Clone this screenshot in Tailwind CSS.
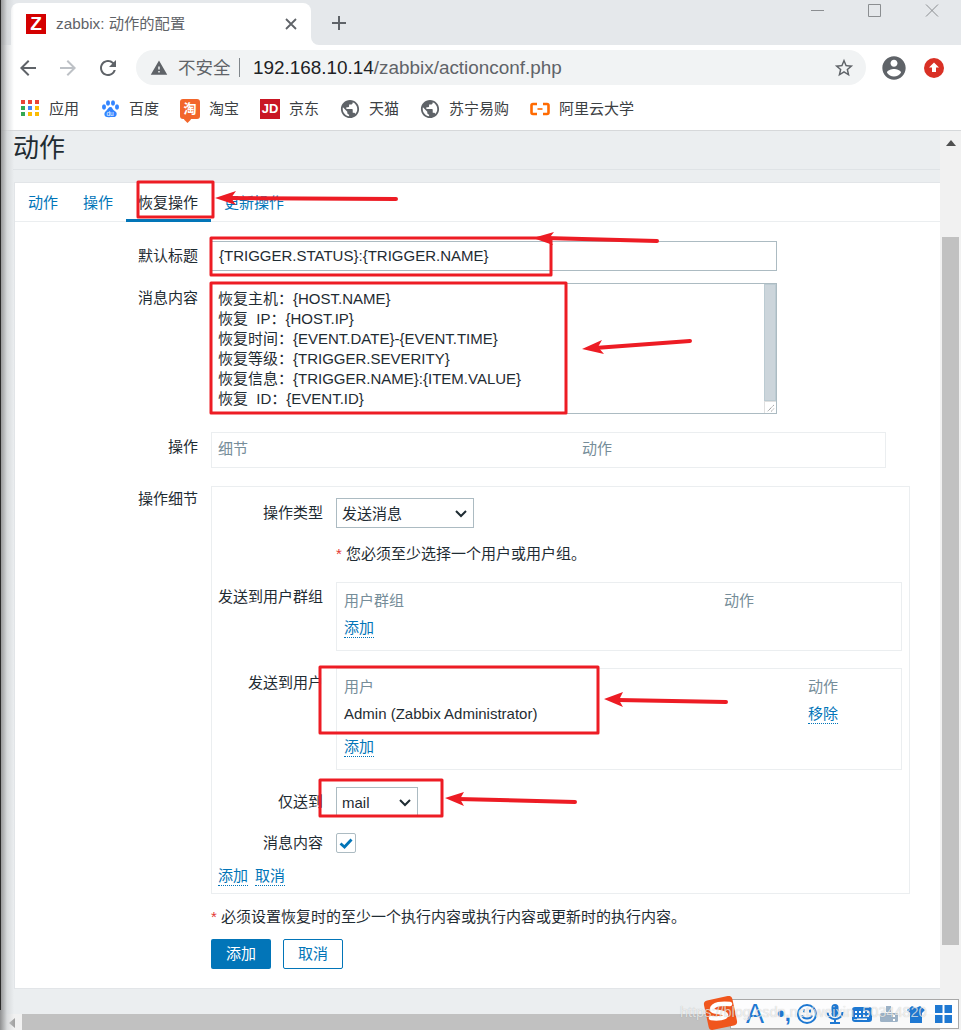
<!DOCTYPE html>
<html lang="zh-CN">
<head>
    <meta charset="UTF-8">
    <title>zabbix: 动作的配置</title>
    <script src="https://cdn.jsdelivr.net/npm/@tailwindcss/browser@4"></script>
</head>
<body class="bg-white">
<div class="relative w-[961px] h-[1030px] overflow-hidden flex flex-col text-[15px] leading-[20px] text-[#1f2c33] [font-family:'Liberation_Sans','Noto_Sans_CJK_SC',sans-serif]">

    <!-- tab strip -->
    <div class="h-[45px] shrink-0 bg-[#e5e8eb] flex pl-[11px]">
        <div class="mt-[3px] w-[300px] h-[42px] bg-white rounded-t-[8px] flex items-center pl-[15px] pr-[12px]">
            <div class="w-[20px] h-[20px] bg-[#d40000] text-white font-bold text-[19px] flex items-center justify-center">Z</div>
            <span class="ml-[10px] text-[#5f6368] text-[15.3px]">zabbix: 动作的配置</span>
            <svg class="ml-auto mr-[1px]" width="14" height="14" viewBox="0 0 14 14" fill="none" stroke="#5f6368" stroke-width="1.8"><path d="M2 2l10 10M12 2L2 12"/></svg>
        </div>
        <div class="self-end w-[8px] h-[8px] bg-white"><div class="w-full h-full bg-[#e5e8eb] rounded-bl-[8px]"></div></div>
        <svg class="mt-[15px] ml-[12px]" width="16" height="16" viewBox="0 0 16 16" fill="#5f6368"><path d="M7 1h2v6h6v2H9v6H7V9H1V7h6z"/></svg>
        <svg class="ml-auto mt-[3px] mr-[21px]" width="130" height="16" viewBox="0 0 130 16" fill="none" stroke="#8b8e91" stroke-width="1"><path d="M1 7.5h13M58.5 1.5h12v12h-12zM116 1.5l12 12M128 1.5l-12 12"/></svg>
    </div>

    <!-- address bar -->
    <div class="h-[45px] shrink-0 bg-white flex items-center pl-[16px]">
        <svg width="24" height="24" viewBox="0 0 24 24" fill="#5f6368"><path d="M20 11H7.83l5.59-5.59L12 4l-8 8 8 8 1.41-1.41L7.83 13H20v-2z"/></svg>
        <svg class="ml-[16px]" width="24" height="24" viewBox="0 0 24 24" fill="#bdc1c6"><path d="M4 11h12.17l-5.59-5.59L12 4l8 8-8 8-1.41-1.41L16.17 13H4v-2z"/></svg>
        <svg class="ml-[16px]" width="24" height="24" viewBox="0 0 24 24" fill="#5f6368"><path d="M17.65 6.35A7.958 7.958 0 0 0 12 4c-4.42 0-7.99 3.58-7.99 8s3.57 8 7.99 8c3.73 0 6.84-2.55 7.73-6h-2.08A5.99 5.99 0 0 1 12 18c-3.31 0-6-2.69-6-6s2.69-6 6-6c1.66 0 3.14.69 4.22 1.78L13 11h7V4l-2.35 2.35z"/></svg>
        <div class="ml-[16px] w-[730px] h-[35px] rounded-full bg-[#f1f3f4] flex items-center pl-[14px] pr-[11px]">
            <svg width="18" height="18" viewBox="0 0 24 24" fill="#5f6368"><path d="M1 21h22L12 2 1 21zm12-3h-2v-2h2v2zm0-4h-2v-4h2v4z"/></svg>
            <span class="ml-[10px] text-[17.500px] text-[#5f6368]">不安全</span>
            <span class="ml-[8px] w-[1.5px] h-[19px] bg-[#80868b]"></span>
            <span class="ml-[13px] text-[18.900px] text-[#5f6368]"><span class="text-[#202124]">192.168.10.14</span>/zabbix/actionconf.php</span>
            <svg class="ml-auto" width="22" height="22" viewBox="0 0 24 24" fill="#5f6368"><path d="M22 9.24l-7.19-.62L12 2 9.19 8.63 2 9.24l5.46 4.73L5.82 21 12 17.27 18.18 21l-1.63-7.03L22 9.24zM12 15.4l-3.76 2.27 1-4.28-3.32-2.88 4.38-.38L12 6.1l1.71 4.04 4.38.38-3.32 2.88 1 4.28L12 15.4z"/></svg>
        </div>
        <svg class="ml-[14px]" width="28" height="28" viewBox="0 0 24 24" fill="#5f6368"><path d="M12 2C6.48 2 2 6.48 2 12s4.48 10 10 10 10-4.48 10-10S17.52 2 12 2zm0 3c1.66 0 3 1.34 3 3s-1.34 3-3 3-3-1.34-3-3 1.34-3 3-3zm0 14.2c-2.5 0-4.71-1.28-6-3.22.03-1.99 4-3.08 6-3.08 1.99 0 5.97 1.09 6 3.08-1.29 1.94-3.5 3.22-6 3.22z"/></svg>
        <svg class="ml-[16px]" width="20" height="20" viewBox="0 0 20 20"><circle cx="10" cy="10" r="10" fill="#d93025"/><path d="M10 4.5l5 5h-3V14H8V9.500H5z" fill="#fff"/></svg>
    </div>

    <!-- bookmarks -->
    <div class="h-[41px] shrink-0 bg-white border-b border-[#d6d8da] flex items-center pl-[20px] gap-[21px] text-[#3c4043] pb-[3px]">
        <div class="flex items-center gap-[9px]">
            <div class="w-[20px] h-[20px] pl-[1px] pt-[1px] grid grid-cols-3 gap-[2px] content-start">
                <i class="w-[4px] h-[4px] bg-[#ea4335]"></i><i class="w-[4px] h-[4px] bg-[#ea4335]"></i><i class="w-[4px] h-[4px] bg-[#ea4335]"></i>
                <i class="w-[4px] h-[4px] bg-[#34a853]"></i><i class="w-[4px] h-[4px] bg-[#4285f4]"></i><i class="w-[4px] h-[4px] bg-[#fbbc04]"></i>
                <i class="w-[4px] h-[4px] bg-[#34a853]"></i><i class="w-[4px] h-[4px] bg-[#fbbc04]"></i><i class="w-[4px] h-[4px] bg-[#fbbc04]"></i>
            </div>
            <span>应用</span>
        </div>
        <div class="flex items-center gap-[9px]">
            <svg width="20" height="20" viewBox="0 0 20 20" fill="#3385ff"><ellipse cx="4" cy="8" rx="2" ry="2.700"/><ellipse cx="8" cy="4" rx="2" ry="2.700"/><ellipse cx="13" cy="4" rx="2" ry="2.700"/><ellipse cx="17" cy="8" rx="2" ry="2.700"/><path d="M10.500 8c-2 0-2.500 2-4 3.500S4 14 4.500 16s3 2.500 6 2 5 1 6-2-1.500-3.500-3-5-1-3-3-3z"/><text x="6.500" y="17" font-size="6.500" fill="#fff">du</text></svg>
            <span>百度</span>
        </div>
        <div class="flex items-center gap-[9px]">
            <div class="relative w-[20px] h-[20px] rounded-[3px] bg-[#f2662b] flex items-center justify-center text-white text-[13px] font-bold leading-none">淘<i class="absolute left-[5px] -bottom-[3px] w-[5px] h-[5px] rotate-45 bg-[#f2662b]"></i></div>
            <span>淘宝</span>
        </div>
        <div class="flex items-center gap-[9px]">
            <div class="w-[20px] h-[20px] bg-[#c91623] flex items-center justify-center text-white text-[13px] font-bold">JD</div>
            <span>京东</span>
        </div>
        <div class="flex items-center gap-[9px]">
            <svg width="20" height="20" viewBox="1 1 22 22" fill="#5f6368"><path d="M12 2C6.480 2 2 6.480 2 12s4.480 10 10 10 10-4.480 10-10S17.520 2 12 2zm-1 17.930c-3.950-.490-7-3.850-7-7.930 0-.620.080-1.210.210-1.790L9 15v1c0 1.100.900 2 2 2v1.930zm6.900-2.540c-.260-.810-1-1.390-1.900-1.390h-1v-3c0-.550-.450-1-1-1H8v-2h2c.550 0 1-.450 1-1V7h2c1.100 0 2-.900 2-2v-.410c2.930 1.190 5 4.060 5 7.410 0 2.080-.800 3.970-2.100 5.390z"/></svg>
            <span>天猫</span>
        </div>
        <div class="flex items-center gap-[9px]">
            <svg width="20" height="20" viewBox="1 1 22 22" fill="#5f6368"><path d="M12 2C6.480 2 2 6.480 2 12s4.480 10 10 10 10-4.480 10-10S17.520 2 12 2zm-1 17.930c-3.950-.490-7-3.850-7-7.930 0-.620.080-1.210.210-1.790L9 15v1c0 1.100.900 2 2 2v1.930zm6.900-2.540c-.260-.810-1-1.390-1.900-1.390h-1v-3c0-.550-.450-1-1-1H8v-2h2c.550 0 1-.450 1-1V7h2c1.100 0 2-.900 2-2v-.410c2.930 1.190 5 4.060 5 7.410 0 2.080-.800 3.970-2.100 5.390z"/></svg>
            <span>苏宁易购</span>
        </div>
        <div class="flex items-center gap-[9px]">
            <svg width="20" height="20" viewBox="0 0 20 20" fill="none" stroke="#ff6a00" stroke-width="2.600"><path d="M7 5H3a1.500 1.500 0 0 0-1.500 1.500v7A1.500 1.500 0 0 0 3 15h4M13 5h4a1.500 1.500 0 0 1 1.500 1.500v7A1.500 1.500 0 0 1 17 15h-4"/><path d="M7.500 10h5" stroke-width="1.600"/></svg>
            <span>阿里云大学</span>
        </div>
    </div>

    <!-- page + vertical scrollbar -->
    <div class="flex h-[883px] shrink-0">
        <main class="w-[940px] bg-[#ebeef0] pl-[14px]">
            <div class="h-[39px] -ml-[1px] border-b border-[#dfe3e6]">
                <h1 class="text-[26px] leading-[34px] font-normal text-[#1f2c33]">动作</h1>
            </div>
            <div class="mt-[12px] bg-white border border-r-0 border-[#e2e5e8] pb-[19px]">
                <!-- tabs -->
                <div class="h-[39px] flex pl-[0.5px] border-b border-[#ebeef0] text-[#0275b8]">
                    <span class="px-[12.5px] pt-[10px]">动作</span>
                    <span class="px-[12.5px] pt-[10px]">操作</span>
                    <span class="ml-[1px] -translate-x-[1px] px-[12.5px] pt-[10px] h-[39px] border-b-[3px] border-[#0275b8] text-[#1f2c33]">恢复操作</span>
                    <span class="px-[12.5px] pt-[10px]">更新操作</span>
                </div>

                <div class="pt-[19px] flex flex-col">
                    <div class="flex gap-[13px]">
                        <div class="w-[183px] pt-[5px] text-right">默认标题</div>
                        <div class="w-[566px] h-[30px] border border-[#acbbc2] pl-[7px] flex items-center">{TRIGGER.STATUS}:{TRIGGER.NAME}</div>
                    </div>
                    <div class="flex gap-[13px] mt-[12px]">
                        <div class="w-[183px] pt-[5px] text-right">消息内容</div>
                        <div class="relative w-[566px] h-[131px] border border-[#acbbc2] pl-[6px] pt-[5px]">
                            <p>恢复主机：{HOST.NAME}</p>
                            <p>恢复&nbsp; IP：{HOST.IP}</p>
                            <p>恢复时间：{EVENT.DATE}-{EVENT.TIME}</p>
                            <p>恢复等级：{TRIGGER.SEVERITY}</p>
                            <p>恢复信息：{TRIGGER.NAME}:{ITEM.VALUE}</p>
                            <p>恢复&nbsp; ID：{EVENT.ID}</p>
                            <div class="absolute right-0 top-0 w-[12px] h-[117px] bg-[#ccd5db] border border-[#bccbd2]"></div>
                            <svg class="absolute right-0 bottom-0 border-l border-t border-[#e0e0e0] bg-white" width="12" height="12" viewBox="0 0 12 12" stroke="#555" stroke-dasharray="1 1"><path d="M3 10l7-7M7 10l3-3"/></svg>
                        </div>
                    </div>
                    <div class="flex gap-[13px] mt-[18px]">
                        <div class="w-[183px] pt-[5px] text-right">操作</div>
                        <div class="w-[675px] h-[36px] border border-[#ebeef0] pl-[6px] pt-[6px] grid grid-cols-[364px_1fr] text-[#768d99]">
                            <span>细节</span><span>动作</span>
                        </div>
                    </div>
                    <div class="flex gap-[13px] mt-[18px]">
                        <div class="w-[183px] pt-[3px] text-right">操作细节</div>
                        <!-- operation details -->
                        <div class="w-[699px] border border-[#ebeef0] pt-[11px] pb-[7px]">
                            <div class="flex gap-[13px]">
                                <div class="w-[111px] pt-[5px] text-right">操作类型</div>
                                <div class="w-[138px] h-[30px] border border-[#acbbc2] pl-[5px] pr-[6px] pt-[2px] flex items-center justify-between">发送消息
                                    <svg width="12" height="8" viewBox="0 0 12 8" fill="none" stroke="#1f2c33" stroke-width="2"><path d="M1 1l5 5 5-5"/></svg>
                                </div>
                            </div>
                            <div class="flex gap-[13px] mt-[16px]">
                                <div class="w-[111px]"></div>
                                <div><span class="text-[#e33734]">*</span> 您必须至少选择一个用户或用户组。</div>
                            </div>
                            <div class="flex gap-[13px] mt-[18px]">
                                <div class="w-[111px] pt-[5px] text-right whitespace-nowrap">发送到用户群组</div>
                                <div class="w-[566px] h-[69px] border border-[#ebeef0] pl-[7px] pt-[8px]">
                                    <div class="grid grid-cols-[380px_1fr] text-[#768d99]"><span>用户群组</span><span>动作</span></div>
                                    <a class="inline-block mt-[7px] text-[#0275b8] border-b border-dotted border-[#0275b8] leading-[19px]">添加</a>
                                </div>
                            </div>
                            <div class="flex gap-[13px] mt-[17px]">
                                <div class="w-[111px] pt-[5px] text-right">发送到用户</div>
                                <div class="w-[566px] h-[102px] border border-[#ebeef0] pl-[7px] pt-[8px]">
                                    <div class="grid grid-cols-[464px_1fr] text-[#768d99]"><span>用户</span><span>动作</span></div>
                                    <div class="grid grid-cols-[464px_1fr] mt-[7px]"><span>Admin (Zabbix Administrator)</span><span><a class="inline-block text-[#0275b8] border-b border-dotted border-[#0275b8] leading-[19px]">移除</a></span></div>
                                    <a class="inline-block mt-[13px] text-[#0275b8] border-b border-dotted border-[#0275b8] leading-[19px]">添加</a>
                                </div>
                            </div>
                            <div class="flex gap-[13px] mt-[17px]">
                                <div class="w-[111px] pt-[5px] text-right">仅送到</div>
                                <div class="w-[82px] h-[30px] border border-[#acbbc2] pl-[5px] pr-[6px] pt-[2px] flex items-center justify-between">mail
                                    <svg width="12" height="8" viewBox="0 0 12 8" fill="none" stroke="#1f2c33" stroke-width="2"><path d="M1 1l5 5 5-5"/></svg>
                                </div>
                            </div>
                            <div class="flex gap-[13px] mt-[16px]">
                                <div class="w-[111px] text-right">消息内容</div>
                                <div class="w-[20px] h-[20px] border border-[#acbbc2] rounded-[2px] flex items-center justify-center">
                                    <svg width="14" height="11" viewBox="0 0 14 11" fill="none" stroke="#0275b8" stroke-width="2.800"><path d="M1.500 5.500l4 3.500 7-7.500"/></svg>
                                </div>
                            </div>
                            <div class="flex gap-[7px] mt-[13px] pl-[6px]">
                                <a class="text-[#0275b8] border-b border-dotted border-[#0275b8] leading-[19px]">添加</a>
                                <a class="text-[#0275b8] border-b border-dotted border-[#0275b8] leading-[19px]">取消</a>
                            </div>
                        </div>
                    </div>
                    <div class="pl-[196px] mt-[13px]"><span class="text-[#e33734]">*</span> 必须设置恢复时的至少一个执行内容或执行内容或更新时的执行内容。</div>
                    <div class="pl-[196px] mt-[12px] flex gap-[12px]">
                        <button class="w-[60px] h-[30px] rounded-[2px] bg-[#0275b8] text-white">添加</button>
                        <button class="w-[60px] h-[30px] rounded-[2px] border border-[#0275b8] text-[#0275b8] bg-white">取消</button>
                    </div>
                </div>
            </div>
        </main>
        <div class="w-[21px] bg-[#f1f1f1] flex flex-col items-center pt-[9px]">
            <svg width="10" height="6" viewBox="0 0 10 6" fill="#505050"><path d="M5 0l5 6H0z"/></svg>
            <div class="w-[17px] h-[708px] mt-[91px] bg-[#c1c1c1]"></div>
        </div>
    </div>

    <!-- horizontal scrollbar -->
    <div class="h-[17px] shrink-0 bg-[#f1f1f1] flex items-center pl-[9px]">
        <svg width="6" height="10" viewBox="0 0 6 10" fill="#a3a3a3"><path d="M0 5l6-5v10z"/></svg>
        <div class="ml-[7px] w-[918px] h-[17px] bg-[#c1c1c1]"></div>
    </div>

    <!-- window edge shadow -->
    <div class="absolute left-0 top-0 w-[14px] h-full pointer-events-none bg-gradient-to-r from-[#8f9091] via-[#cfd2d4]/70 to-transparent"></div>
    <div class="absolute left-0 top-0 w-[1px] h-[1010px] pointer-events-none bg-[#2b2b2b]"></div>

    <!-- red annotations -->
    <svg class="absolute inset-0 pointer-events-none" width="961" height="1030" fill="none" stroke="#ed1c24">
        <g stroke-width="3" stroke-linejoin="round">
            <rect x="138" y="182" width="75" height="35"/>
            <rect x="211" y="238" width="340" height="37"/>
            <rect x="211" y="283" width="355" height="130"/>
            <rect x="320" y="667" width="278" height="66"/>
            <rect x="320" y="780" width="122" height="36"/>
        </g>
        <g stroke-width="4" stroke-linecap="round">
            <path d="M226 198L396 199"/>
            <path d="M545 238L657 241"/>
            <path d="M595 348L690 341"/>
            <path d="M618 700L726 702"/>
            <path d="M458 799L575 802"/>
        </g>
        <g fill="#ed1c24" stroke="none">
            <path d="M215 198L236 191L231 198L236 205z"/>
            <path d="M533 238L554 232L549 238.500L553 245z"/>
            <path d="M582 349L602 340L598 347L604 354z"/>
            <path d="M604 699L623 692L619 700L623 707z"/>
            <path d="M445 798L464 792L460 799L464 806z"/>
        </g>
    </svg>

    <!-- input method bar -->
    <div class="absolute left-[730px] top-[999px] w-[229px] h-[30px] bg-white/90 border border-[#a8a8a8] flex items-center text-[#1e78d2]">
        <span class="ml-[15px] w-[20px] text-[27px] leading-none font-normal">A</span>
        <span class="ml-[11px] w-[14px] text-[22px] font-bold leading-none">•,</span>
        <svg class="ml-[5px]" width="22" height="22" viewBox="0 0 22 22" fill="none" stroke="#1e78d2" stroke-width="2"><circle cx="11" cy="11" r="9"/><path d="M6 12.500c1.500 4 8.500 4 10 0"/><path d="M8 6.500v3M14 6.500v3"/></svg>
        <svg class="ml-[8px]" width="18" height="22" viewBox="0 0 18 22" fill="#1e78d2"><rect x="5.500" y="1" width="7" height="13" rx="3.500"/><path d="M1.500 9c0 9.500 15 9.500 15 0" fill="none" stroke="#1e78d2" stroke-width="2"/><path d="M8 16h2v3h4v2H4v-2h4z"/></svg>
        <svg class="ml-[7px]" width="22" height="17" viewBox="0 0 22 17" fill="#1e78d2"><rect x="1" y="1" width="20" height="15" rx="3"/><path d="M4 5h2v2H4zM8 5h2v2H8zM12 5h2v2h-2zM16 5h2v2h-2zM4 9h2v2H4zM8 9h2v2H8zM12 9h2v2h-2zM16 9h2v2h-2zM6 12.500h10v1.500H6z" fill="#fff"/></svg>
        <svg class="ml-[6px]" width="20" height="18" viewBox="0 0 20 18" fill="#9db2c6"><path d="M7 1h5v6H7z"/><rect x="1" y="8" width="18" height="9" rx="1.500"/><path d="M14 10h2v2h-2zM14 14h2v2h-2z" fill="#fff"/></svg>
        <svg class="ml-[8px]" width="18" height="20" viewBox="0 0 18 20" fill="#1e78d2"><path d="M5 2l4 2 4-2 5 4-3 3v10H3V9L0 6z"/></svg>
        <svg class="ml-[9px]" width="19" height="20" viewBox="0 0 19 20" fill="#1e78d2"><rect x="1" y="1" width="7.500" height="8"/><rect x="10.500" y="1" width="7.500" height="8"/><rect x="1" y="11" width="7.500" height="8"/><rect x="10.500" y="11" width="7.500" height="8"/></svg>
    </div>
    <svg class="absolute left-[703px] top-[996px]" width="35" height="34" viewBox="0 0 35 34"><rect x="3" y="2" width="29" height="30" rx="4" transform="rotate(-12 17 17)" fill="#f0561d"/><path d="M27 8c-8-1-17 0-18 5-1 4 13 2 14 6 0 3-8 4-15 3" fill="none" stroke="#fff" stroke-width="4.500" stroke-linecap="round"/></svg>

    <!-- watermark -->
    <div class="absolute left-[680px] top-[1002px] text-[14.500px] text-white/70 [text-shadow:0_0_1px_rgba(0,0,0,0.25)] whitespace-nowrap">https://blog.csdn.net/weixin_50344820</div>
</div>
</body>
</html>
